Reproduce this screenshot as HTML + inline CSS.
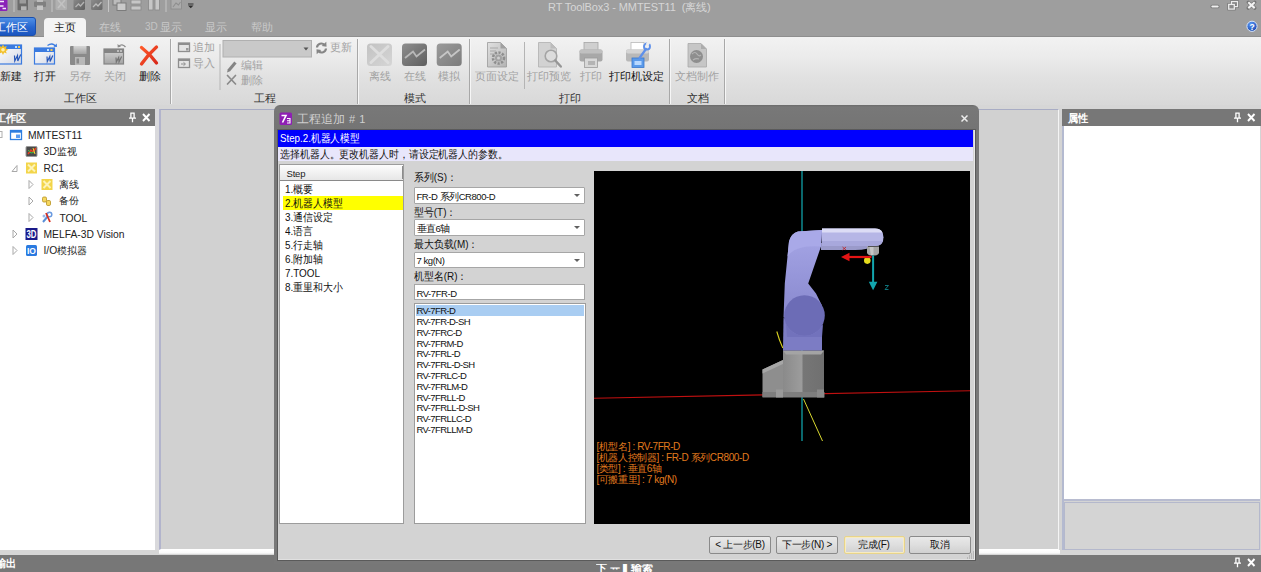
<!DOCTYPE html>
<html><head><meta charset="utf-8">
<style>
*{box-sizing:border-box;margin:0;padding:0}
html,body{width:1261px;height:572px;overflow:hidden;background:#d4d4d4;font-family:"Liberation Sans",sans-serif;font-size:12px;color:#222}
.a{position:absolute}
.t{position:absolute;white-space:nowrap;line-height:1}
#titlebar{left:0;top:0;width:1261px;height:36px;background:#9e9e9e}
#ribbon{left:0;top:35.500px;width:1261px;height:69.500px;background:linear-gradient(#f2f2f2 0%,#ebebeb 30%,#e1e1e1 60%,#d8d8d8 100%);border-top:1px solid #8e8e8e}
.sep{position:absolute;width:2px;top:39px;height:65px;background:linear-gradient(90deg,#a8a8a8 50%,#f6f6f6 50%)}
.sep2{position:absolute;width:1px;top:42px;height:47px;background:#b4b4b4}
.rl{position:absolute;top:70px;height:13px;line-height:13px;font-size:11px;text-align:center;white-space:nowrap;transform:translateX(-50%)}
.dis{color:#a2a2a2}
.gl{position:absolute;top:92px;height:13px;line-height:13px;font-size:11px;color:#333;white-space:nowrap;transform:translateX(-50%)}
.tr{font-size:10.300px;color:#222;height:12px;line-height:12px}
.d{font-size:11px;color:#111;height:11px;line-height:11px;transform:scaleX(.9);transform-origin:0 0}
.m{font-size:9.500px;color:#111;height:10px;line-height:10px;letter-spacing:-.6px}
.o{font-size:10px;color:#e07a1e;height:10px;line-height:10px;letter-spacing:-.4px}
.cb{position:absolute;left:413.500px;width:171.500px;height:16.500px;background:#fff;border:1px solid #a6a6a6;border-radius:1px}
.cb span{position:absolute;left:2px;top:2.500px;font-size:9.500px;line-height:11px;color:#111;white-space:nowrap;letter-spacing:-.45px}
.cb i{position:absolute;right:4.500px;top:6px;width:0;height:0;border-left:3px solid transparent;border-right:3px solid transparent;border-top:3.500px solid #606060}
.btn{position:absolute;top:535.500px;height:18.500px;border:1px solid #8a8a8a;border-radius:2px;background:linear-gradient(#e9e9e9,#dedede 50%,#d0d0d0);font-size:10px;line-height:16px;text-align:center;color:#111;white-space:nowrap;letter-spacing:-.3px}
.ph{background:#777;color:#fff;font-weight:bold;font-size:12px}
</style></head><body>
<!-- TITLE BAR -->
<div id="titlebar" class="a">
<!-- quick access icons (cut off at top) -->
<svg class="a" style="left:0;top:0" width="200" height="14" viewBox="0 0 200 14">
 <defs><linearGradient id="qd" x1="0" y1="0" x2="1" y2="1"><stop offset="0" stop-color="#8c8c8c"/><stop offset="1" stop-color="#5e5e5e"/></linearGradient></defs>
 <rect x="-2" y="-4" width="9.500" height="15" rx="1.500" fill="#8a22b8"/><path d="M-1 1.500h5M-1 6h4.500M2.500 8.500h3.500" stroke="#f4e8fa" stroke-width="1.600"/>
 <rect x="13.500" y="-2" width="1" height="14" fill="#c6c6c6"/>
 <rect x="17.500" y="-2" width="10.500" height="12.300" rx=".8" fill="#6c6c6c"/><rect x="19.500" y="-2" width="6.500" height="5.500" fill="#9c9c9c"/><rect x="21" y="6.300" width="5.500" height="4" fill="#b4b4b4"/>
 <rect x="34" y="1.500" width="12" height="5.500" rx="1" fill="#808080"/><rect x="37" y="-2" width="6" height="4" fill="#bcbcbc"/><rect x="37" y="5.500" width="6" height="4.500" fill="#c4c4c4"/>
 <rect x="51.500" y="-2" width="1" height="14" fill="#c6c6c6"/>
 <rect x="55.500" y="-2" width="11.500" height="12" rx="1.500" fill="#b0b0b0"/><path d="M58 0l7 8M65 0l-7 8" stroke="#c2c2c2" stroke-width="1.600"/>
 <rect x="73.500" y="-2" width="11.500" height="12" rx="1.500" fill="url(#qd)"/><path d="M75.500 7l3-3 2 2 3.500-4" stroke="#b4b4b4" stroke-width="1.300" fill="none"/>
 <rect x="91" y="-2" width="11.500" height="12" rx="1.500" fill="url(#qd)" opacity=".85"/><path d="M93 7l3-3 2 2 3.500-4" stroke="#bcbcbc" stroke-width="1.300" fill="none"/>
 <rect x="108" y="-2" width="1" height="14" fill="#c6c6c6"/>
 <rect x="113" y="-1" width="8" height="6" fill="#bcbcbc" stroke="#7c7c7c" stroke-width="1"/><rect x="117" y="3" width="9" height="7.500" fill="#cacaca" stroke="#7c7c7c" stroke-width="1"/>
 <rect x="131" y="0" width="10" height="4" fill="#c6c6c6" stroke="#888" stroke-width=".8"/><rect x="131" y="6" width="10" height="4" fill="#c6c6c6" stroke="#888" stroke-width=".8"/>
 <rect x="148.500" y="-1" width="4.500" height="11" fill="#c6c6c6" stroke="#888" stroke-width=".8"/><rect x="155" y="-1" width="4.500" height="11" fill="#c6c6c6" stroke="#888" stroke-width=".8"/>
 <rect x="165.500" y="-2" width="1" height="14" fill="#c6c6c6"/>
 <rect x="171" y="-2" width="10.500" height="11" fill="#acacac" stroke="#8a8a8a" stroke-width=".8"/><path d="M173 7l3-4 2.500 2 2-3" stroke="#8e8e8e" stroke-width="1.100" fill="none"/>
 <path d="M188 3.500h5.500v1h-5.500zM188 5.500h5.500l-2.750 2.700z" fill="#2e2e2e"/>
</svg>
<div class="t" style="left:548px;top:1.500px;font-size:11px;color:#d6d6d6;letter-spacing:-.1px">RT ToolBox3 - MMTEST11&nbsp; (离线)</div>
<!-- window controls -->
<svg class="a" style="left:1205px;top:0" width="56" height="36" viewBox="0 0 56 36">
 <defs><radialGradient id="hb" cx=".4" cy=".3" r=".8"><stop offset="0" stop-color="#5a9af8"/><stop offset="1" stop-color="#143fa8"/></radialGradient></defs>
 <rect x="5.500" y="4.700" width="9" height="3.600" rx="1.500" fill="#747474"/><rect x="6.300" y="5.400" width="7.400" height="2.200" rx="1" fill="#f0f0f0"/>
 <rect x="26.500" y="1.600" width="6" height="5" fill="none" stroke="#747474" stroke-width="2.600"/><rect x="23.700" y="4.400" width="5.600" height="4.700" fill="none" stroke="#747474" stroke-width="2.600"/>
 <rect x="26.500" y="1.600" width="6" height="5" fill="none" stroke="#ececec" stroke-width="1.300"/><rect x="23.700" y="4.400" width="5.600" height="4.700" fill="#8a8a8a" stroke="#ececec" stroke-width="1.300"/>
 <path d="M43.300 2.300l6.400 5.800M49.700 2.300l-6.400 5.800" stroke="#747474" stroke-width="3.400" stroke-linecap="round"/>
 <path d="M43.300 2.300l6.400 5.800M49.700 2.300l-6.400 5.800" stroke="#f2f2f2" stroke-width="2.100"/>
 <circle cx="47" cy="26.300" r="5.100" fill="url(#hb)" stroke="#d8e6fa" stroke-width="1"/>
 <text x="47" y="29.600" font-size="8.500" font-weight="bold" fill="#fff" text-anchor="middle" font-family="Liberation Sans, sans-serif">?</text>
</svg>
<!-- tabs -->
<div class="a" style="left:-4px;top:17px;width:40px;height:19px;border-radius:3px;background:linear-gradient(#4f90e6,#2766cf 55%,#1c56c0);border:1px solid #1a4fae"></div>
<div class="t" style="left:-5px;top:21.500px;font-size:11px;color:#fff">工作区</div>
<div class="a" style="left:44px;top:18px;width:42px;height:19px;border-radius:4px 4px 0 0;background:#f3f3f3;z-index:2"></div>
<div class="t" style="left:53.500px;top:21.500px;font-size:11px;color:#111;z-index:3">主页</div>
<div class="t" style="left:99px;top:21.500px;font-size:11px;color:#c9c9c9">在线</div>
<div class="t" style="left:145px;top:22px;font-size:10px;color:#c4c4c4">3D</div>
<div class="t" style="left:160px;top:21.500px;font-size:11px;color:#c9c9c9">显示</div>
<div class="t" style="left:204.500px;top:21.500px;font-size:11px;color:#c9c9c9">显示</div>
<div class="t" style="left:250.500px;top:21.500px;font-size:11px;color:#c9c9c9">帮助</div>
</div>
<!-- RIBBON -->
<div id="ribbon" class="a"></div>
<div class="a" style="left:0;top:105px;width:1261px;height:4px;background:#d6d6d6"></div>
<!-- group 1: workspace -->
<svg class="a" style="left:0;top:42px" width="165" height="26" viewBox="0 0 165 26">
 <defs>
  <linearGradient id="gw" x1="0" y1="0" x2="1" y2="1"><stop offset="0" stop-color="#fff"/><stop offset="1" stop-color="#d4d8e4"/></linearGradient>
  <linearGradient id="gg" x1="0" y1="0" x2="0" y2="1"><stop offset="0" stop-color="#d6d6d6"/><stop offset="1" stop-color="#a4a4a4"/></linearGradient>
  <linearGradient id="gr" x1="0" y1="0" x2="1" y2="1"><stop offset="0" stop-color="#ff5a2a"/><stop offset="1" stop-color="#d8281a"/></linearGradient>
 </defs>
 <!-- new -->
 <rect x="-2" y="3" width="23.500" height="19" fill="url(#gw)" stroke="#3b7be0" stroke-width="1.200"/><rect x="-2" y="3" width="23.500" height="4" fill="#3b7be0"/>
 <path d="M3 2.500l1.200 2.300 2.500-.8-.8 2.500 2.300 1.200-2.300 1.200 .8 2.500-2.500-.8-1.200 2.300-1.200-2.300-2.500 .8 .8-2.500-2.300-1.200 2.300-1.200-.8-2.500 2.500 .8z" fill="#f2c02c"/><circle cx="3" cy="7.700" r="1.800" fill="#fdf0b0"/>
 <rect x="15" y="4" width="2" height="2" fill="#bfe0ff"/><rect x="18" y="4" width="2" height="2" fill="#f6c84a"/>
 <path d="M14.500 13.500l.3 5.500 2.700-5.500 .3 5.500 2.900-6.500" stroke="#2454b8" stroke-width="1.200" fill="none"/>
 <!-- open -->
 <rect x="34.500" y="6" width="20" height="16" fill="url(#gw)" stroke="#3b7be0" stroke-width="1.200"/><rect x="34.500" y="6" width="20" height="4" fill="#3b7be0"/>
 <rect x="47" y="7" width="2" height="2" fill="#bfe0ff"/><rect x="50.500" y="7" width="2" height="2" fill="#f6c84a"/>
 <path d="M47 14.500l.3 5 2.500-5 .3 5 2.700-6" stroke="#2454b8" stroke-width="1.200" fill="none"/>
 <path d="M47.500 3.500q5-3.500 8 .8" stroke="#3b7be0" stroke-width="1.400" fill="none"/><path d="M53.500 4.500l3.500.5-.3-3.500z" fill="#3b7be0"/>
 <!-- save -->
 <rect x="70" y="4" width="20" height="19" rx="1" fill="#8a8a8a"/><rect x="73.500" y="4" width="13" height="8" fill="url(#gg)"/><rect x="75" y="15" width="10" height="8" fill="#b8b8b8"/><rect x="76.500" y="16.500" width="2.500" height="5" fill="#8a8a8a"/>
 <!-- close -->
 <rect x="104" y="7" width="19.500" height="15" fill="url(#gg)" stroke="#848484" stroke-width="1.200"/><rect x="104" y="7" width="19.500" height="4" fill="#848484"/>
 <rect x="117" y="8" width="2" height="2" fill="#bdbdbd"/><rect x="120" y="8" width="2" height="2" fill="#bdbdbd"/>
 <path d="M116 15.500l.3 4.500 2.400-4.500 .3 4.500 2.600-5.500" stroke="#747474" stroke-width="1.200" fill="none"/>
 <path d="M118.500 4.500q3.500-3.500 7 .5" stroke="#8c8c8c" stroke-width="1.300" fill="none"/><path d="M117.500 2l.2 3.500 3.300-.8z" fill="#8c8c8c"/>
 <!-- delete X -->
 <path d="M141.500 5.500q8.500 6.500 15 15.500M156.500 5q-8.500 7.500-15 17" stroke="url(#gr)" stroke-width="3.300" stroke-linecap="round" fill="none"/>
</svg>
<div class="rl" style="left:11px;color:#222">新建</div>
<div class="rl" style="left:45px;color:#222">打开</div>
<div class="rl dis" style="left:80px">另存</div>
<div class="rl dis" style="left:114.500px">关闭</div>
<div class="rl" style="left:150px;color:#222">删除</div>
<div class="gl" style="left:80.500px">工作区</div>
<div class="sep" style="left:169.500px"></div>
<!-- group 2: project -->
<svg class="a" style="left:176px;top:40px" width="180" height="50" viewBox="0 0 180 50">
 <rect x="2.500" y="3" width="11" height="8.500" fill="#e4e4e4" stroke="#8e8e8e" stroke-width="1.300"/><rect x="2.500" y="3" width="11" height="2" fill="#8e8e8e"/><rect x="10" y="8" width="2.500" height="2.500" fill="#9a9a9a"/>
 <rect x="2.500" y="19" width="11" height="8.500" fill="#e4e4e4" stroke="#8e8e8e" stroke-width="1.300"/><rect x="2.500" y="19" width="11" height="2" fill="#8e8e8e"/><path d="M5 24h4M7.500 22.300l2 1.700-2 1.700" stroke="#8e8e8e" stroke-width="1" fill="none"/>
 <rect x="43.500" y="4" width="1" height="46" fill="#b6b6b6"/>
 <rect x="47" y=".5" width="88.500" height="16.500" fill="#c9c9c9" stroke="#b0b0b0" stroke-width="1"/>
 <path d="M127.500 7.500h5l-2.500 3z" fill="#555"/>
 <!-- refresh -->
 <path d="M141 7.500a4.300 4.300 0 0 1 7.500-2.500" stroke="#868686" stroke-width="2.200" fill="none"/><path d="M150.300 1.800l.2 5-4.800-.9z" fill="#868686"/>
 <path d="M150 8.500a4.300 4.300 0 0 1-7.500 2.500" stroke="#868686" stroke-width="2.200" fill="none"/><path d="M140.700 14.200l-.2-5 4.800.9z" fill="#868686"/>
 <!-- pencil -->
 <path d="M51.800 29.300l6.500-7.800 2.300 1.900-6.500 7.800-3.100 1.200z" fill="#848484"/>
 <!-- small X -->
 <path d="M51.500 35.500l8 8.500M59.500 35.500l-8 8.500" stroke="#8a8a8a" stroke-width="1.700" stroke-linecap="round"/>
</svg>
<div class="t dis" style="left:193px;top:42px;font-size:10.500px">追加</div>
<div class="t dis" style="left:193px;top:58px;font-size:10.500px">导入</div>
<div class="t dis" style="left:330px;top:42px;font-size:10.500px">更新</div>
<div class="t dis" style="left:241px;top:60px;font-size:10.500px">编辑</div>
<div class="t dis" style="left:241px;top:75px;font-size:10.500px">删除</div>
<div class="gl" style="left:265px">工程</div>
<div class="sep" style="left:357px"></div>
<!-- group 3: mode -->
<svg class="a" style="left:365px;top:42px" width="100" height="26" viewBox="0 0 100 26">
 <defs>
  <linearGradient id="m1" x1="0" y1="0" x2="1" y2="1"><stop offset="0" stop-color="#c2c2c2"/><stop offset="1" stop-color="#d6d6d6"/></linearGradient>
  <linearGradient id="m2" x1="0" y1="0" x2="1" y2="1"><stop offset="0" stop-color="#8e8e8e"/><stop offset="1" stop-color="#5e5e5e"/></linearGradient>
  <linearGradient id="m3" x1="0" y1="0" x2="1" y2="1"><stop offset="0" stop-color="#9a9a9a"/><stop offset="1" stop-color="#7c7c7c"/></linearGradient>
 </defs>
 <rect x="2" y="1.500" width="25" height="22.500" rx="3.500" fill="url(#m1)"/>
 <path d="M6 4.500l17 16M23 4.500l-17 16" stroke="#dedede" stroke-width="3" stroke-linecap="round"/>
 <rect x="37" y="1.500" width="25" height="22.500" rx="3.500" fill="url(#m2)"/>
 <path d="M40 16l8-6.500 3.500 5 8.500-7" stroke="#b8b8b8" stroke-width="1.800" fill="none"/>
 <rect x="71.700" y="1.500" width="25" height="22.500" rx="3.500" fill="url(#m3)"/>
 <path d="M74.700 16l8-6.500 3.500 5 8.500-7" stroke="#c6c6c6" stroke-width="1.800" fill="none"/>
</svg>
<div class="rl dis" style="left:380px">离线</div>
<div class="rl dis" style="left:414.500px">在线</div>
<div class="rl dis" style="left:449px">模拟</div>
<div class="gl" style="left:415px">模式</div>
<div class="sep" style="left:469px"></div>
<!-- group 4: print -->
<svg class="a" style="left:480px;top:40px" width="245" height="30" viewBox="0 0 245 30">
 <defs><linearGradient id="pg" x1="0" y1="0" x2="1" y2="1"><stop offset="0" stop-color="#e0e0e0"/><stop offset="1" stop-color="#b4b4b4"/></linearGradient></defs>
 <!-- page setup -->
 <path d="M7.500 2.500h13l6 6v18.500h-19z" fill="url(#pg)" stroke="#9a9a9a" stroke-width=".8"/><path d="M20.500 2.500v6h6z" fill="#a0a0a0"/>
 <path d="M10 8h8M10 11h6M10 14h5" stroke="#a8a8a8" stroke-width="1"/>
 <circle cx="18.500" cy="18" r="5.500" fill="none" stroke="#8e8e8e" stroke-width="2.600" stroke-dasharray="2.200 1.400"/><circle cx="18.500" cy="18" r="3.500" fill="#a2a2a2"/><circle cx="18.500" cy="18" r="1.500" fill="#d0d0d0"/>
 <!-- preview -->
 <path d="M58.500 2.500h12l6 6v18.500h-18z" fill="#d2d2d2" stroke="#b0b0b0" stroke-width=".8"/><path d="M70.500 2.500v6h6z" fill="#bcbcbc"/>
 <circle cx="71" cy="16" r="5.800" fill="#dcdcdc" stroke="#a4a4a4" stroke-width="1.600"/><path d="M75.300 20.500l5.500 6" stroke="#969696" stroke-width="2.400" stroke-linecap="round"/>
 <!-- print -->
 <rect x="104" y="2.500" width="14" height="8" fill="#cfcfcf" stroke="#a6a6a6" stroke-width=".8"/>
 <rect x="99.500" y="9.500" width="23" height="12" rx="2" fill="#a8a8a8"/><rect x="99.500" y="9.500" width="23" height="4" rx="2" fill="#c0c0c0"/>
 <rect x="104.500" y="18" width="13" height="9.500" fill="#d8d8d8" stroke="#9c9c9c" stroke-width=".8"/><rect x="108" y="21" width="7" height="4" fill="#b4b4b4"/>
 <!-- printer setup -->
 <rect x="151" y="2.500" width="13" height="8" fill="#fff" stroke="#b8b8b8" stroke-width=".8"/>
 <rect x="146" y="9.500" width="23" height="12" rx="2" fill="#b8b8b8"/><rect x="146" y="9.500" width="23" height="4" rx="2" fill="#d4d4d4"/>
 <rect x="152" y="18" width="12" height="9.500" fill="#5a9aea" stroke="#3a78cc" stroke-width=".8"/><rect x="154.500" y="21" width="7" height="4" fill="#b8d8ff"/>
 <path d="M159.500 18l6.500-9" stroke="#5e90ea" stroke-width="2.200" stroke-linecap="round"/><circle cx="167" cy="6.500" r="3" fill="none" stroke="#5e90ea" stroke-width="1.900"/><rect x="166.500" y="1.500" width="3" height="4" fill="#ededed" transform="rotate(35 168 3.500)"/>
 <!-- doc make -->
 <path d="M208 3.500h13l5.500 5.500v18h-18.500z" fill="#c6c6c6" stroke="#a8a8a8" stroke-width=".8"/><path d="M221 3.500v5.500h5.500z" fill="#acacac"/>
 <circle cx="216.500" cy="16.500" r="6.500" fill="#8e8e8e"/><path d="M212 14q3-3 5 0t4 1M213 20q3-2 6-1" stroke="#b4b4b4" stroke-width="1.200" fill="none"/>
</svg>
<div class="sep2" style="left:523.500px"></div>
<div class="rl dis" style="left:497px">页面设定</div>
<div class="rl dis" style="left:549px">打印预览</div>
<div class="rl dis" style="left:590.500px">打印</div>
<div class="rl" style="left:636.500px;color:#111;font-size:11px">打印机设定</div>
<div class="gl" style="left:570px">打印</div>
<div class="sep" style="left:668.500px"></div>
<div class="rl dis" style="left:696.500px">文档制作</div>
<div class="gl" style="left:697.500px">文档</div>
<div class="sep" style="left:723.500px"></div>
<!-- WORKSPACE -->
<div id="work">
<!-- left panel -->
<div class="a ph" style="left:0;top:109px;width:155px;height:17px"></div>
<div class="t" style="left:-4.100px;top:112.500px;font-size:11px;font-weight:bold;color:#fff;transform:scaleX(.93);transform-origin:0 0">工作区</div>
<svg class="a" style="left:126px;top:111px" width="28" height="14" viewBox="0 0 28 14"><path d="M4.300 2.200h4.400M4.900 2.200v5M8.100 2.200v5M3 7.200h7M6.500 7.200v4" stroke="#fff" stroke-width="1.300" fill="none"/><path d="M17 3l6.500 7M23.500 3l-6.500 7" stroke="#fff" stroke-width="1.900"/></svg>
<div class="a" style="left:0;top:126px;width:155px;height:423.500px;background:#fff"></div>
<div class="a" style="left:155px;top:109px;width:4.500px;height:446px;background:#d9d9dc"></div>
<div class="a" style="left:0;top:549.500px;width:1261px;height:5px;background:#d6d6d6"></div>
<!-- tree -->
<svg class="a" style="left:0;top:126px" width="155" height="135" viewBox="0 0 155 135">
 <rect x="-2" y="5.500" width="4" height="6" fill="none" stroke="#b0b0b0" stroke-width="1"/>
 <rect x="10.500" y="4.500" width="11" height="9" fill="#fff" stroke="#2f7fe0" stroke-width="1.300"/><rect x="10.500" y="4.500" width="11" height="2.200" fill="#2f7fe0"/><rect x="16" y="8.500" width="4" height="3.500" fill="#5a9cf0"/>
 <rect x="26" y="20.500" width="11" height="10" rx="1" fill="#4a4a4a" stroke="#9a9a9a" stroke-width="1"/><path d="M28 28l3-4 2 2 3-4" stroke="#f04020" stroke-width="1.400" fill="none"/><path d="M28 24l3 3 4-1" stroke="#40c040" stroke-width="1" fill="none"/><path d="M33 22l2 6" stroke="#ffd030" stroke-width="1"/>
 <path d="M12 45.500l5-6v6z" fill="none" stroke="#a8a8a8" stroke-width="1"/>
 <rect x="26" y="36.500" width="11" height="11" fill="#f3d54a"/><path d="M28 38.500l7 7M35 38.500l-7 7" stroke="#fdf3b8" stroke-width="2"/>
 <path d="M29 54.500l4 4-4 4z" fill="none" stroke="#a8a8a8" stroke-width="1"/>
 <rect x="41.500" y="53" width="11" height="11" fill="#f3d54a"/><path d="M43.500 55l7 7M50.500 55l-7 7" stroke="#fdf3b8" stroke-width="2"/>
 <path d="M29 71l4 4-4 4z" fill="none" stroke="#a8a8a8" stroke-width="1"/>
 <rect x="42.500" y="71" width="4" height="5" rx="1.300" fill="#f6d860" stroke="#b89220" stroke-width=".8"/><rect x="46.500" y="74.500" width="4" height="5" rx="1.300" fill="#f6d860" stroke="#b89220" stroke-width=".8"/>
 <path d="M29 87.500l4 4-4 4z" fill="none" stroke="#a8a8a8" stroke-width="1"/>
 <path d="M43 96l5-6" stroke="#5a8fd8" stroke-width="2"/><circle cx="49.500" cy="88.500" r="2.300" fill="none" stroke="#6a9ae0" stroke-width="1.500"/><path d="M46 87l4 9" stroke="#d83020" stroke-width="1.800"/><circle cx="44" cy="90" r="1.500" fill="#9ab8e8"/>
 <path d="M13 104l4 4-4 4z" fill="none" stroke="#a8a8a8" stroke-width="1"/>
 <rect x="25.500" y="102" width="12" height="12" fill="#1a1a8a"/><text x="31.500" y="112" font-size="10" font-weight="bold" fill="#fff" text-anchor="middle" font-family="Liberation Sans, sans-serif" textLength="10" lengthAdjust="spacingAndGlyphs">3D</text>
 <path d="M13 120.500l4 4-4 4z" fill="none" stroke="#a8a8a8" stroke-width="1"/>
 <rect x="26" y="119" width="11" height="11" rx="1.500" fill="#2a7ae0"/><text x="31.500" y="128" font-size="9" font-weight="bold" fill="#fff" text-anchor="middle" font-family="Liberation Sans, sans-serif" textLength="9" lengthAdjust="spacingAndGlyphs">IO</text>
</svg>
<div class="t tr" style="left:28px;top:130px">MMTEST11</div>
<div class="t tr" style="left:43.500px;top:145.500px">3D监视</div>
<div class="t tr" style="left:43.500px;top:163px">RC1</div>
<div class="t tr" style="left:59px;top:178.500px">离线</div>
<div class="t tr" style="left:59px;top:195px">备份</div>
<div class="t tr" style="left:59.500px;top:212.500px">TOOL</div>
<div class="t tr" style="left:43.500px;top:229px">MELFA-3D Vision</div>
<div class="t tr" style="left:43.500px;top:244.500px">I/O模拟器</div>
<!-- MDI area -->
<div class="a" style="left:159px;top:109px;width:900px;height:441px;background:#d1d1d1;border:1px solid #a8acc4;border-left:2px solid #b2b4cc;border-right-color:#f4f4f4;border-bottom-color:#fff"></div>
<div class="a" style="left:159px;top:549.500px;width:900.500px;height:4.500px;background:linear-gradient(#fff,#fafafa 70%,#e8e8e8)"></div>
<!-- right panel -->
<div class="a ph" style="left:1062px;top:109px;width:199px;height:17px"></div>
<div class="t" style="left:1067.500px;top:112.500px;font-size:11px;font-weight:bold;color:#fff;transform:scaleX(.93);transform-origin:0 0">属性</div>
<svg class="a" style="left:1232px;top:111px" width="28" height="14" viewBox="0 0 28 14"><path d="M3.300 2.200h4.400M3.900 2.200v5M7.100 2.200v5M2 7.200h7M5.500 7.200v4" stroke="#fff" stroke-width="1.300" fill="none"/><path d="M16 3l6.500 7M22.500 3l-6.500 7" stroke="#fff" stroke-width="1.900"/></svg>
<div class="a" style="left:1062px;top:126px;width:199px;height:424px;background:#d4d4d4;border-left:2px solid #b4bad0"></div>
<div class="a" style="left:1064px;top:126px;width:196px;height:373px;background:#fff"></div>
<div class="a" style="left:1064px;top:499px;width:196px;height:2px;background:#b8bcd0"></div>
<div class="a" style="left:1064px;top:502px;width:196px;height:48px;background:#d4d4d4;border:1px solid #b4b8cc"></div>
<!-- bottom bar -->
<div class="a ph" style="left:0;top:554.500px;width:1261px;height:17.500px"></div>
<div class="t" style="left:-4.500px;top:558px;font-size:11px;font-weight:bold;color:#fff;transform:scaleX(.93);transform-origin:0 0">输出</div>
<svg class="a" style="left:1232px;top:556px" width="28" height="14" viewBox="0 0 28 14"><path d="M3.300 2.200h4.400M3.900 2.200v5M7.100 2.200v5M2 7.200h7M5.500 7.200v4" stroke="#fff" stroke-width="1.300" fill="none"/><path d="M16 3l6.500 7M22.500 3l-6.500 7" stroke="#fff" stroke-width="1.900"/></svg>
<div class="a" style="left:596px;top:564px;width:60px;height:8px;overflow:hidden"><div class="t" style="left:0;top:-1px;font-size:11px;font-weight:bold;color:#fff">下 ᅲ ▌输索</div></div>
</div>
<!-- DIALOG -->
<div id="dlg">
<div class="a" style="left:273.500px;top:105px;width:705.500px;height:458.500px;background:linear-gradient(#6a6a6a,#787878 2px,#747474 25px,#787878 26px);border-radius:6px 6px 0 0"></div>
<div class="a" style="left:278px;top:130px;width:697px;height:430px;background:#d3d3d3;border-right:1px solid #e8e8e8;border-bottom:1px solid #e0e0e0;box-shadow:0 0 0 1px #5a5a5a"></div>
<!-- dialog icon -->
<svg class="a" style="left:279px;top:111.500px" width="14" height="14" viewBox="0 0 14 14"><rect x=".5" y=".5" width="12.500" height="12.500" rx="1.500" fill="#8e1fb4"/><path d="M2.500 3.500h4.500l-3.500 7" stroke="#fff" stroke-width="1.600" fill="none"/><path d="M8 6.500h3v4.500h-3M8 8.700h3" stroke="#fff" stroke-width="1.100" fill="none"/></svg>
<div class="t" style="left:296.500px;top:112.500px;font-size:12px;color:#cfcfcf;letter-spacing:.25px">工程追加</div><div class="t" style="left:349px;top:114px;font-size:11px;color:#cfcfcf">#</div><div class="t" style="left:359.300px;top:114px;font-size:11px;color:#cfcfcf">1</div>
<svg class="a" style="left:960px;top:114px" width="10" height="10" viewBox="0 0 10 10"><path d="M1.500 1.500l6 6M7.500 1.500l-6 6" stroke="#ececec" stroke-width="1.500"/></svg>
<div class="a" style="left:278px;top:130px;width:695px;height:17px;background:#0000fe"></div>
<div class="t" style="left:280px;top:133px;font-size:11px;transform:scaleX(.885);transform-origin:0 0;color:#fff">Step.2.机器人模型</div>
<div class="a" style="left:278px;top:147px;width:695px;height:14px;background:#e8e6fb"></div>
<div class="t" style="left:280px;top:148.500px;font-size:11px;transform:scaleX(.9);transform-origin:0 0;color:#111">选择机器人。更改机器人时，请设定机器人的参数。</div>
<!-- step list -->
<div class="a" style="left:278.500px;top:164px;width:125.500px;height:360px;background:#fff;border:1px solid #9c9c9c"></div>
<div class="a" style="left:280px;top:165px;width:123px;height:16px;background:linear-gradient(#fdfdfd,#e6e6e6);border-bottom:1px solid #8a8a8a"></div>
<div class="a" style="left:401.500px;top:166px;width:1.500px;height:13px;background:#8c8c8c"></div>
<div class="t" style="left:286.500px;top:169px;font-size:9.500px;letter-spacing:-.2px;color:#222">Step</div>
<div class="t d" style="left:284.500px;top:183.5px">1.概要</div>
<div class="a" style="left:282.500px;top:196px;width:120.500px;height:14px;background:#ffff00"></div>
<div class="t d" style="left:284.500px;top:197.5px">2.机器人模型</div>
<div class="t d" style="left:284.500px;top:211.5px">3.通信设定</div>
<div class="t d" style="left:284.500px;top:225.5px">4.语言</div>
<div class="t d" style="left:284.500px;top:239.5px">5.行走轴</div>
<div class="t d" style="left:284.500px;top:253.5px">6.附加轴</div>
<div class="t d" style="left:284.500px;top:267.5px">7.TOOL</div>
<div class="t d" style="left:284.500px;top:281.5px">8.重里和大小</div>
<!-- form -->
<div class="t d" style="left:413.500px;top:172px">系列(S)：</div>
<div class="cb" style="top:187px"><span>FR-D 系列CR800-D</span><i></i></div>
<div class="t d" style="left:413.500px;top:206.500px">型号(T)：</div>
<div class="cb" style="top:219px"><span>垂直6轴</span><i></i></div>
<div class="t d" style="left:413.500px;top:238.500px">最大负载(M)：</div>
<div class="cb" style="top:251.500px"><span>7 kg(N)</span><i></i></div>
<div class="t d" style="left:413.500px;top:271px">机型名(R)：</div>
<div class="cb" style="top:284px;height:16px;border-radius:0"><span>RV-7FR-D</span></div>
<div class="a" style="left:413.500px;top:303px;width:172px;height:220.500px;background:#fff;border:1px solid #9c9c9c"></div>
<div class="a" style="left:415.500px;top:305px;width:168.500px;height:10.800px;background:#a9cdf2"></div>
<div class="t m" style="left:416.500px;top:306.2px">RV-7FR-D</div>
<div class="t m" style="left:416.500px;top:317px">RV-7FR-D-SH</div>
<div class="t m" style="left:416.500px;top:327.8px">RV-7FRC-D</div>
<div class="t m" style="left:416.500px;top:338.6px">RV-7FRM-D</div>
<div class="t m" style="left:416.500px;top:349.4px">RV-7FRL-D</div>
<div class="t m" style="left:416.500px;top:360.2px">RV-7FRL-D-SH</div>
<div class="t m" style="left:416.500px;top:371px">RV-7FRLC-D</div>
<div class="t m" style="left:416.500px;top:381.8px">RV-7FRLM-D</div>
<div class="t m" style="left:416.500px;top:392.6px">RV-7FRLL-D</div>
<div class="t m" style="left:416.500px;top:403.4px">RV-7FRLL-D-SH</div>
<div class="t m" style="left:416.500px;top:414.2px">RV-7FRLLC-D</div>
<div class="t m" style="left:416.500px;top:425px">RV-7FRLLM-D</div>
<!-- 3d view -->
<div class="a" style="left:594px;top:171px;width:376px;height:353px;background:#000"></div>
<svg id="v3d" class="a" style="left:594px;top:171px" width="376" height="353" viewBox="594 171 376 353">
 <defs>
  <linearGradient id="fa" x1="0" y1="0" x2="0" y2="1"><stop offset="0" stop-color="#e2e2f6"/><stop offset=".35" stop-color="#c0c0ec"/><stop offset="1" stop-color="#a4a4dc"/></linearGradient>
  <linearGradient id="ua" x1="0" y1="0" x2="0" y2="1"><stop offset="0" stop-color="#a6a6e6"/><stop offset="1" stop-color="#8686cc"/></linearGradient>
  <linearGradient id="bs" x1="0" y1="0" x2="1" y2="0"><stop offset="0" stop-color="#8a8a8a"/><stop offset=".45" stop-color="#9c9c9c"/><stop offset=".5" stop-color="#767676"/><stop offset="1" stop-color="#707070"/></linearGradient>
 </defs>
 <!-- axis lines -->
 <path d="M802 171V441" stroke="#10a0a8" stroke-width="1.300"/>
 <path d="M594 398.200L970 390.800" stroke="#c01010" stroke-width="1.100"/>
 <path d="M803.500 399L822.500 441" stroke="#d8d830" stroke-width="1"/>
 <!-- base -->
 <path d="M762.500 369.500l20.500-9.500v37h-20.500z" fill="#8e8e8e"/>
 <path d="M762.500 369.500l20.500-9.500v4l-20.500 9.500z" fill="#a6a6a6"/>
 <path d="M783 350.500h41v42l-4 4h-33l-4-4z" fill="url(#bs)"/>
 <path d="M783 350.500h41l-3 4h-35z" fill="#a4a4a4"/>
 <path d="M762.500 392h62v5.500h-62z" fill="#7e7e7e"/>
 <rect x="776" y="389.500" width="7" height="8" fill="#9a9a9a"/><rect x="817" y="389.500" width="7" height="8" fill="#8a8a8a"/>
 <!-- lower body -->
 <path d="M783.500 318l38.500 8v24.500h-39z" fill="#7c7cc4"/>
 <!-- upper arm -->
 <path d="M798 231.500q-6.500 1.500-9 10l-4.200 42-1.300 34 36 6 2.500-18-6-12-7.800-10 12.800-37 1-16.500z" fill="url(#ua)"/>
 <path d="M798 231.500q-6.500 1.500-9 10l-1.500 15q8-12 33.500-10l1-16.500z" fill="#a9a9e8"/>
 <!-- shoulder joint -->
 <circle cx="804.500" cy="315.500" r="20.300" fill="#6c6cb6"/>
 <path d="M786 324a20.300 20.300 0 0 0 37 0l-1 13h-35z" fill="#7272bc"/>
 <!-- forearm -->
 <path d="M821 243h47v5.500q-8 2-16 1.500h-31z" fill="#9a9aca"/>
 <path d="M822 228.500h53q8.500 0 8.500 8.700t-8.500 8.700h-53z" fill="#b6b6e6"/>
 <path d="M822 228.500h53q5.500 0 7.500 4h-60.500z" fill="#dcdcf5"/>
 <path d="M822 241h61q-1.500 5-8 5h-53z" fill="#a8a8dc"/>
 <path d="M867 246.500h12v6q0 3-6 3t-6-3z" fill="#a6a6a6"/><path d="M869.500 247h4v8.300h-2.500z" fill="#c6c6c6"/>
 <!-- tool arrows -->
 <circle cx="867.300" cy="260.600" r="3.300" fill="#e6dc1c"/>
 <path d="M871.500 257H847" stroke="#e41414" stroke-width="2.200"/><path d="M841 257l8.500-4.300v8.600z" fill="#e41414"/>
 <path d="M842.500 247l3.500 3M846 247l-3.500 3" stroke="#c01c1c" stroke-width=".8"/>
 <path d="M873.100 255.500V283" stroke="#12a6ae" stroke-width="2"/><path d="M873.100 290.200l-4.300-8.500h8.600z" fill="#12a6ae"/>
 <path d="M885 285.500h3.500l-3.500 4h3.500" stroke="#0e8088" stroke-width=".9" fill="none"/>
 <path d="M776.800 331.500q2.500 9 6 16.500" stroke="#d8d020" stroke-width="1.100" fill="none"/>
</svg>
<div class="t o" style="left:596.500px;top:442px">[机型名] : RV-7FR-D</div>
<div class="t o" style="left:596.500px;top:453px">[机器人控制器] : FR-D 系列CR800-D</div>
<div class="t o" style="left:596.500px;top:464px">[类型] : 垂直6轴</div>
<div class="t o" style="left:596.500px;top:475px">[可搬重里] : 7 kg(N)</div>
<!-- buttons -->
<div class="btn" style="left:709px;width:62px">&lt; 上一步(B)</div>
<div class="btn" style="left:776px;width:62px">下一步(N) &gt;</div>
<div class="btn" style="left:843.500px;width:61px;border-color:#e8d48a;box-shadow:inset 0 0 0 1px #f8ecc0">完成(F)</div>
<div class="btn" style="left:909px;width:62px">取消</div>
<svg class="a" style="left:966px;top:551px" width="9" height="9" viewBox="0 0 9 9"><path d="M7 1h1M5 3h1M7 3h1M3 5h1M5 5h1M7 5h1M1 7h1M3 7h1M5 7h1M7 7h1" stroke="#9a9a9a" stroke-width="1"/></svg>
</div>
</body></html>
